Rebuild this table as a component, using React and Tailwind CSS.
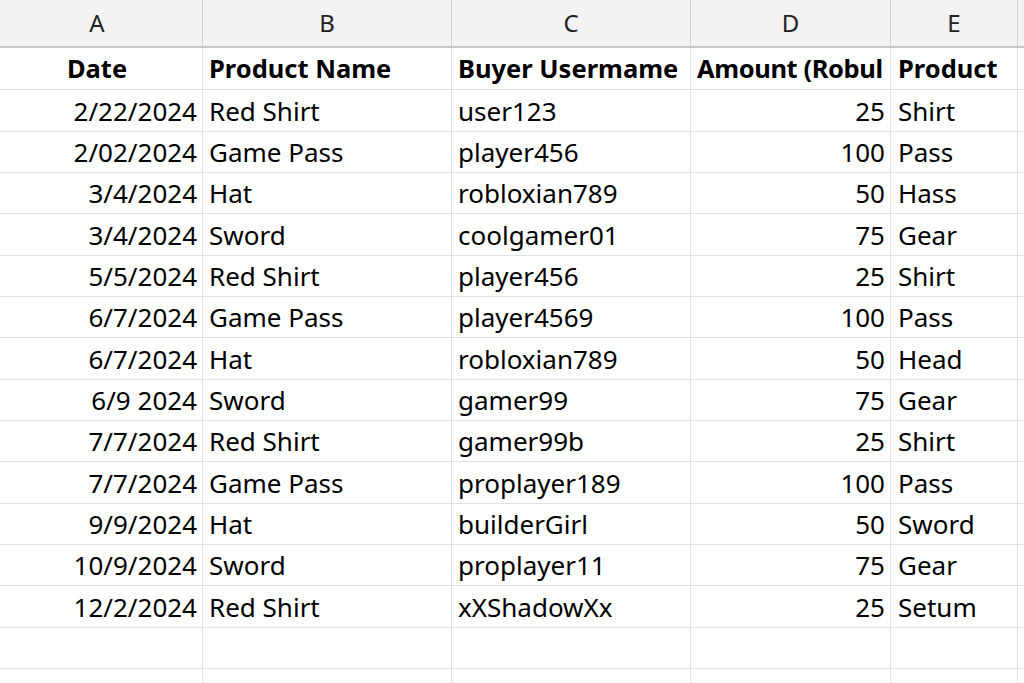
import React from "react";

const rows = [
  ["2/22/2024", "Red Shirt", "user123", "25", "Shirt"],
  ["2/02/2024", "Game Pass", "player456", "100", "Pass"],
  ["3/4/2024", "Hat", "robloxian789", "50", "Hass"],
  ["3/4/2024", "Sword", "coolgamer01", "75", "Gear"],
  ["5/5/2024", "Red Shirt", "player456", "25", "Shirt"],
  ["6/7/2024", "Game Pass", "player4569", "100", "Pass"],
  ["6/7/2024", "Hat", "robloxian789", "50", "Head"],
  ["6/9 2024", "Sword", "gamer99", "75", "Gear"],
  ["7/7/2024", "Red Shirt", "gamer99b", "25", "Shirt"],
  ["7/7/2024", "Game Pass", "proplayer189", "100", "Pass"],
  ["9/9/2024", "Hat", "builderGirl", "50", "Sword"],
  ["10/9/2024", "Sword", "proplayer11", "75", "Gear"],
  ["12/2/2024", "Red Shirt", "xXShadowXx", "25", "Setum"],
  ["", "", "", "", ""],
  ["", "", "", "", ""],
];

const heights = ["h-[42px]", "h-[41px]", "h-[41px]"];

function Row({ cells, h, bold }) {
  const base = "border-r border-[#e1e1e1] overflow-hidden whitespace-nowrap flex items-center";
  return (
    <div className={`flex border-b border-[#e1e1e1] ${h}`}>
      <div className={`${base} w-[203px] shrink-0 ${bold ? "justify-center pr-[8px]" : "justify-end pr-[5px]"}`}>{cells[0]}</div>
      <div className={`${base} w-[249px] shrink-0 pl-[6px]`}>{cells[1]}</div>
      <div className={`${base} w-[239px] shrink-0 pl-[6px]`}>{cells[2]}</div>
      <div className={`${base} w-[200px] shrink-0 ${bold ? "pl-[6px] tracking-[-0.4px]" : "justify-end pr-[5px]"}`}>{cells[3]}</div>
      <div className={`${base} w-[127px] shrink-0 pl-[7px]`}>{cells[4]}</div>
      <div className="flex-1"></div>
    </div>
  );
}

export default function App() {
  const hdr = "border-r border-[#d0d0d0] flex items-center justify-center shrink-0";
  return (
    <div className="w-[1024px] h-[683px] overflow-hidden bg-white text-black text-[26px] leading-none" style={{ fontFamily: '"Noto Sans", sans-serif' }}>
      <div className="flex h-[48px] bg-[#f3f3f3] border-b-2 border-[#c8c8c8] text-[24px] text-[#222]">
        <div className={`${hdr} w-[203px] pr-[8px]`}>A</div>
        <div className={`${hdr} w-[249px]`}>B</div>
        <div className={`${hdr} w-[239px]`}>C</div>
        <div className={`${hdr} w-[200px]`}>D</div>
        <div className={`${hdr} w-[127px]`}>E</div>
        <div className="flex-1"></div>
      </div>
      <div className="font-bold text-[25.5px]">
        <Row cells={["Date", "Product Name", "Buyer Usermame", "Amount (Robul", "Product"]} h="h-[42px]" bold />
      </div>
      {rows.map((r, i) => (
        <Row key={i} cells={r} h={heights[i % 3]} />
      ))}
    </div>
  );
}
